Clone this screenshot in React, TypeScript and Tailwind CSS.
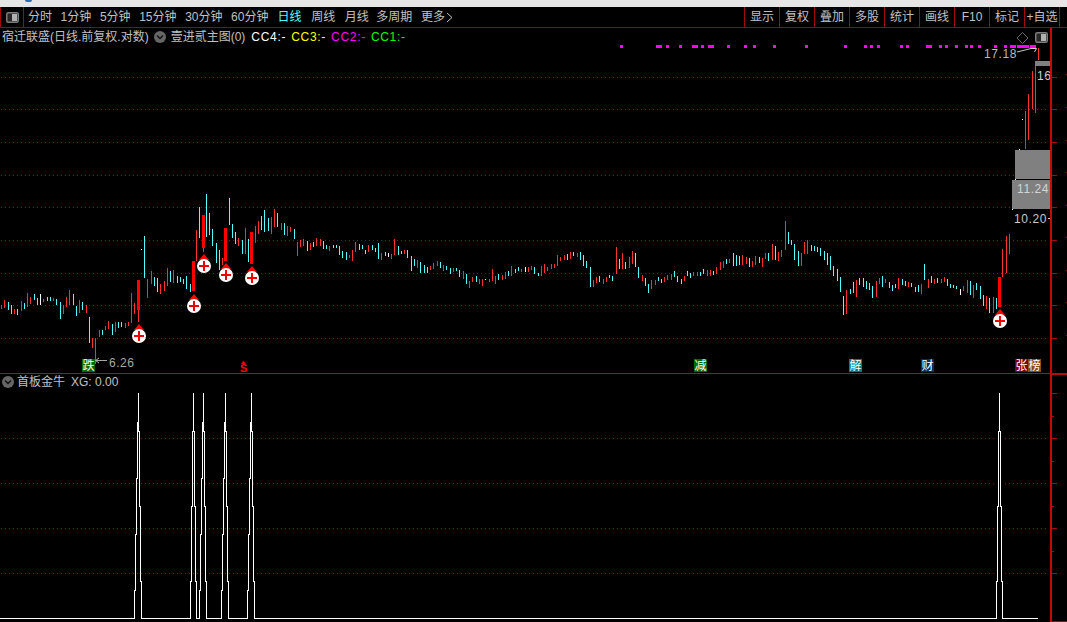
const C: Record<string, string> = { r: "#ff3232", c: "#54ffff", w: "#ffffff" };
type K = [number, number, number, string];

const seg1: K[] = [[4,345,358,"r"],[13,330,355,"r"],[25,337,362,"c"],[34,345,372,"c"],[43,357,372,"r"],[52,358,375,"c"],[64,333,363,"r"],[73,340,357,"c"],[82,309,350,"r"],[91,320,340,"r"],[103,312,330,"c"],[112,325,345,"c"],[121,312,345,"w"],[130,327,335,"r"],[142,322,333,"c"],[151,322,335,"c"],[160,325,335,"r"],[169,327,345,"c"],[181,336,387,"c"],[190,345,373,"r"],[199,320,350,"r"],[208,300,345,"r"],[220,312,345,"c"],[229,348,377,"c"],[238,330,370,"r"],[247,336,360,"c"],[259,345,368,"r"],[268,381,458,"c"],[277,443,473,"r"],[286,443,520,"r"],[298,420,440,"r"],[307,420,435,"c"],[316,407,420,"r"],[325,393,417,"r"],[337,402,435,"c"],[346,395,425,"r"],[355,396,413,"c"],[364,397,412,"c"],[376,399,415,"r"],[385,395,407,"r"],[394,308,397,"r"],[403,340,372,"r"],[415,350,395,"r"],[433,138,263,"c"],[442,267,323,"r"],[454,243,283,"r"],[463,262,290,"c"],[472,265,308,"c"],[481,282,312,"r"],[493,272,302,"r"],[502,235,288,"r"],[511,243,276,"c"],[520,240,278,"r"],[532,258,278,"c"],[541,262,276,"c"],[550,267,283,"c"],[559,258,297,"c"],[571,282,305,"c"],[589,120,212,"r"],[598,52,145,"c"],[610,170,185,"r"],[619,12,140,"c"],[628,70,135,"c"],[637,118,170,"c"],[649,160,220,"c"],[658,180,240,"c"],[667,205,225,"r"],[688,25,107,"c"],[697,103,145,"c"],[706,125,160,"c"],[715,145,170,"r"],[727,150,192,"c"],[736,113,192,"r"],[745,148,218,"c"],[766,108,160,"r"],[775,93,132,"r"],[784,78,120,"c"],[793,60,125,"c"],[805,85,125,"c"],[814,80,132,"r"],[823,57,110,"r"],[832,68,110,"c"],[844,100,120,"r"],[853,100,137,"c"],[862,108,137,"r"],[871,112,128,"r"],[883,118,147,"c"],[892,155,197,"r"]];
const seg2: K[] = [[1,90,110,"r"],[10,88,110,"r"],[22,93,122,"c"],[31,98,120,"r"],[40,95,110,"c"],[49,84,108,"r"],[61,87,107,"r"],[70,92,115,"c"],[79,105,118,"c"],[88,108,122,"r"],[100,105,114,"c"],[109,105,114,"c"],[118,108,135,"c"],[127,123,145,"c"],[139,125,150,"c"],[148,135,143,"r"],[157,120,152,"r"],[166,96,125,"r"],[178,102,120,"c"],[187,105,118,"c"],[196,120,132,"c"],[205,105,125,"r"],[217,105,120,"c"],[226,113,126,"c"],[235,98,145,"c"],[244,128,150,"r"],[256,126,138,"c"],[265,128,140,"w"],[274,132,147,"r"],[283,87,135,"r"],[295,108,135,"c"],[304,122,132,"c"],[313,120,132,"r"],[322,120,144,"c"],[334,138,183,"c"],[343,147,168,"c"],[352,150,175,"r"],[361,155,187,"c"],[373,165,190,"c"],[382,170,187,"c"],[391,168,180,"r"],[400,158,175,"r"],[412,153,168,"r"],[421,155,172,"c"],[430,165,183,"r"],[439,168,180,"c"],[451,173,190,"c"],[460,175,187,"r"],[469,174,184,"c"],[478,180,200,"c"],[490,183,207,"r"],[499,192,222,"c"],[508,213,234,"r"],[517,200,215,"r"],[529,198,216,"c"],[538,207,222,"r"],[547,207,228,"r"],[556,207,209,"w"],[568,207,216,"r"],[577,177,213,"r"],[586,197,222,"r"],[595,192,210,"c"],[607,195,210,"r"],[616,185,205,"r"],[625,183,198,"c"],[634,168,198,"r"],[646,177,190,"c"],[655,171,184,"c"],[664,177,187,"r"],[676,170,184,"w"],[685,170,184,"r"],[694,168,180,"r"],[703,170,192,"c"],[715,189,198,"c"],[724,168,198,"r"],[733,162,190,"r"],[742,171,183,"r"],[754,163,178,"r"],[763,162,175,"r"],[772,135,168,"r"],[781,140,153,"r"],[793,135,150,"r"],[802,132,150,"c"],[811,126,147,"r"],[820,126,138,"c"],[832,129,141,"r"],[841,126,150,"c"],[850,135,168,"c"],[859,153,174,"c"],[871,171,231,"c"],[880,210,231,"r"],[889,201,219,"r"],[898,198,216,"c"],[910,207,222,"r"],[919,201,216,"r"],[928,195,204,"c"],[937,198,213,"c"],[949,111,192,"r"],[958,147,177,"c"],[967,129,177,"r"],[976,156,177,"c"],[988,141,174,"r"],[997,123,162,"r"],[1006,129,171,"c"],[1015,171,204,"c"],[1027,195,213,"r"],[1036,204,228,"c"],[1045,222,249,"c"]];
const seg3: K[] = [[4,210,237,"r"],[16,210,225,"r"],[25,202,215,"c"],[34,207,219,"c"],[43,202,217,"r"],[52,195,210,"r"],[64,192,210,"r"],[73,183,202,"c"],[82,198,217,"c"],[94,207,222,"c"],[103,198,213,"r"],[112,183,198,"c"],[121,190,204,"c"],[130,187,198,"r"],[142,187,198,"r"],[151,185,197,"c"],[160,177,192,"c"],[172,180,198,"r"],[181,180,198,"r"],[190,182,195,"c"],[199,171,193,"r"],[211,156,180,"r"],[220,153,174,"r"],[229,147,162,"c"],[238,147,159,"r"],[250,129,168,"c"],[259,135,168,"c"],[268,138,165,"c"],[277,135,165,"r"],[289,141,162,"r"],[298,144,171,"c"],[307,153,171,"r"],[316,138,165,"r"],[328,141,159,"c"],[337,144,171,"r"],[346,129,147,"r"],[355,129,153,"c"],[367,102,150,"r"],[376,108,150,"c"],[385,126,153,"r"],[394,120,141,"r"],[406,33,120,"r"],[415,66,102,"c"],[424,90,105,"c"],[433,102,150,"c"],[445,123,168,"c"],[454,129,168,"r"],[463,96,132,"r"],[472,90,132,"r"],[484,105,123,"c"],[493,108,123,"c"],[502,111,126,"c"],[511,114,138,"c"],[523,123,150,"c"],[532,129,165,"c"],[541,138,180,"c"],[550,168,198,"c"],[562,177,213,"c"],[571,201,246,"c"],[580,258,315,"c"],[589,240,312,"r"],[601,237,252,"c"],[610,216,249,"c"],[619,210,261,"r"],[628,204,225,"c"],[640,204,231,"c"],[649,213,237,"c"],[658,219,240,"c"],[667,228,264,"c"],[679,213,261,"r"],[688,204,222,"r"],[697,198,231,"c"],[706,207,219,"r"],[718,216,234,"c"],[727,225,243,"c"],[736,222,234,"c"],[745,204,237,"r"],[757,207,225,"c"],[766,213,228,"c"],[775,216,231,"r"],[784,219,231,"c"],[796,231,246,"c"],[805,225,246,"c"],[814,222,252,"r"],[823,162,210,"c"],[835,207,234,"r"],[844,198,219,"c"],[853,207,222,"r"],[862,204,219,"c"],[874,207,219,"r"],[883,201,216,"r"],[892,207,228,"c"],[901,222,234,"c"],[910,225,234,"c"],[919,228,237,"c"],[931,237,255,"w"],[940,228,243,"r"],[952,210,249,"r"],[961,213,255,"c"],[970,225,264,"r"],[979,219,240,"c"],[991,228,267,"c"],[1000,255,288,"c"],[1009,258,297,"r"],[1018,264,309,"c"],[1030,261,309,"r"],[1039,264,297,"c"],[1058,117,201,"r"],[1069,78,189,"r"],[1078,72,132,"r"]];

const candles: { x: number; y1: number; y2: number; c: string }[] = [
  ...seg1.map(([x, a, b, c]) => ({ x: Math.floor(x / 3), y1: a / 3 + 190, y2: b / 3 + 190, c: C[c] })),
  ...seg2.map(([x, a, b, c]) => ({ x: Math.floor(x / 3) + 300, y1: a / 3 + 210, y2: b / 3 + 210, c: C[c] })),
  ...seg3.map(([x, a, b, c]) => ({ x: Math.floor(x / 3) + 650, y1: a / 3 + 210, y2: b / 3 + 210, c: C[c] })),
  { x: 1025, y1: 111, y2: 149, c: C.r },
  { x: 1028, y1: 94, y2: 140, c: C.r },
  { x: 1032, y1: 71, y2: 109, c: C.r },
  { x: 1035, y1: 65, y2: 113, c: C.r },
  { x: 1038, y1: 48, y2: 60, c: C.r },
];

const bodies = [[137, 280, 310], [192, 261, 291], [202, 215, 248], [224, 228, 261], [250, 232, 264], [998, 277, 307]];
const markers = [[139, 336], [194, 306], [204, 266], [226, 275], [252, 278], [1000, 321]];
const magenta: [number, number][] = [[620,3],[656,6],[666,3],[679,3],[692,6],[701,3],[708,6],[727,3],[744,3],[753,3],[773,3],[805,3],[844,3],[864,3],[870,3],[877,3],[900,3],[906,3],[926,6],[939,3],[945,3],[955,3],[965,3],[970,3],[978,3],[994,3],[1004,3],[1010,6],[1017,12],[1030,6]];
const topGrid = [77, 109, 142, 175, 207, 240, 273, 305, 338];
const lowGrid = [438, 483, 528, 573];
const labels = [
  { t: "跌", x: 82, c: "bg-[#006b00]" },
  { t: "减", x: 694, c: "bg-[#006b00]" },
  { t: "解", x: 849, c: "bg-[#007a7a]" },
  { t: "财", x: 921, c: "bg-[#00305c]" },
  { t: "张", x: 1015, c: "bg-[#800000]" },
  { t: "榜", x: 1028, c: "bg-[#8a4a10]" },
];
const leftItems: [string, string][] = [
  ["分时", ""],
  ["1分钟", ""],
  ["5分钟", ""],
  ["15分钟", ""],
  ["30分钟", ""],
  ["60分钟", ""],
  ["日线", "ml-[0.5px] text-[#54ffff]"],
  ["周线", "ml-px"],
  ["月线", "ml-px"],
  ["多周期", "-ml-px"],
];
const rightItems = ["显示", "复权", "叠加", "多股", "统计", "画线", "F10", "标记", "+自选"];

const peakL4 = [[-4, 590], [-3, 534], [-2, 478], [-1, 422]];
const peakL3 = [[-3, 581], [-2, 506], [-1, 431]];
function peakPoints(c: number, left: number[][]) {
  const p: string[] = [`${c + left[0][0] + 0.5},618.5`];
  let lastY = 618.5;
  left.forEach(([dx, y]) => {
    p.push(`${c + dx + 0.5},${lastY}`, `${c + dx + 0.5},${y}`);
    lastY = y;
  });
  p.push(`${c + 0.5},${lastY}`, `${c + 0.5},393`, `${c + 0.5},431`);
  p.push(`${c + 1.5},431`, `${c + 1.5},506`, `${c + 2.5},506`, `${c + 2.5},581`, `${c + 3.5},581`, `${c + 3.5},618.5`);
  return p.join(" ");
}

function ToggleIcon() {
  return (
    <svg width="13" height="11" viewBox="0 0 13 11" className="shrink-0">
      <rect x="0.75" y="0.75" width="11.5" height="9.5" rx="1.5" fill="#262626" stroke="#7c7c7c" strokeWidth="1.5" />
      <rect x="6" y="2" width="5" height="7" fill="#b0b0b0" />
    </svg>
  );
}

function Chevron() {
  return (
    <svg width="12" height="12" viewBox="0 0 12 12" className="shrink-0">
      <circle cx="6" cy="6" r="6" fill="#666" />
      <path d="M3 4.5 L6 7.5 L9 4.5" fill="none" stroke="#111" strokeWidth="1.4" />
    </svg>
  );
}

const font = "font-['Liberation_Sans','Noto_Sans_CJK_SC',sans-serif]";

export default function App() {
  return (
    <div className={`w-[1067px] h-[622px] overflow-hidden bg-black flex flex-col text-xs text-[#c0c0c0] ${font}`}>
      <div className="h-[7px] shrink-0 bg-[#e6e6e6] relative">
        <div className="absolute left-[25px] top-0 w-[7px] h-[2px] rounded-b bg-[#2a6db0]" />
      </div>
      <div className="h-[21px] shrink-0 flex items-stretch border-b border-[#8f0a0a]">
        <div className="w-[24px] shrink-0 flex items-center justify-center border-x border-[#a00a0a]">
          <ToggleIcon />
        </div>
        <div className="flex items-center gap-[8.6px] pl-[4px]">
          {leftItems.map(([t, c]) => (
            <span key={t} className={c}>{t}</span>
          ))}
          <span className="flex items-center gap-[1px]">
            更多
            <svg width="7" height="11" viewBox="0 0 7 11"><path d="M1 1 L6 5.5 L1 10" fill="none" stroke="#c0c0c0" /></svg>
          </span>
        </div>
        <div className="ml-auto mr-[7px] flex items-stretch border-r border-[#a00a0a]">
          {rightItems.map((t) => (
            <div key={t} className="w-[35px] flex items-center justify-center border-l border-[#a00a0a]">{t}</div>
          ))}
        </div>
      </div>

      <div className="h-[346px] shrink-0 relative border-b border-[#b80c0c]">
        <div className="flex items-center h-[17px] pl-[2px] whitespace-nowrap relative z-10">
          <span>宿迁联盛(日线.前复权.对数)</span>
          <span className="ml-[5px]"><Chevron /></span>
          <span className="ml-[5px]">壹进贰主图(0)</span>
          <span className="ml-[6px] tracking-[0.7px] text-white">CC4:-</span>
          <span className="ml-[5px] tracking-[0.7px] text-[#ffff00]">CC3:-</span>
          <span className="ml-[5px] tracking-[0.7px] text-[#ff00ff]">CC2:-</span>
          <span className="ml-[5px] tracking-[0.7px] text-[#00ff00]">CC1:-</span>
        </div>
        <span className="absolute left-[1035px] top-[4px] z-10"><ToggleIcon /></span>
        <span className="absolute left-[984px] top-[18px] tracking-[0.6px] text-[#b8b8b8]">17.18</span>
        <span className="absolute left-[1037px] top-[40px] tracking-[0.5px] text-[#d0d0d0]">16</span>
        <span className="absolute left-[1017px] top-[153px] z-10 tracking-[0.6px] text-[#d4d4d4]">11.24</span>
        <span className="absolute left-[1014px] top-[183px] tracking-[0.6px] text-[#c8c8c8]">10.20</span>
        <span className="absolute left-[109px] top-[327px] tracking-[0.5px] text-[#a8a8a8]">6.26</span>
        <span className="absolute left-[240px] top-[335px] z-10 text-[11px] leading-none font-bold text-[#ff0000]">S</span>
        {labels.map((l) => (
          <span key={l.t} className={`absolute top-[331px] w-[13px] h-[13px] flex items-center justify-center text-white text-xs leading-none ${l.c}`} style={{ left: l.x }}>{l.t}</span>
        ))}
      </div>

      <div className="flex-1 relative">
        <div className="flex items-center h-[15px] pl-[2px] whitespace-nowrap">
          <Chevron />
          <span className="ml-[3px]">首板金牛</span>
          <span className="ml-[6px]">XG: 0.00</span>
        </div>
      </div>

      <svg width="1067" height="622" viewBox="0 0 1067 622" className="absolute left-0 top-0 pointer-events-none" shapeRendering="crispEdges">
        {topGrid.map((y) => (
          <line key={y} x1="1" x2="1046" y1={y + 0.5} y2={y + 0.5} stroke="#8a1010" strokeDasharray="1 3" />
        ))}
        {lowGrid.map((y) => (
          <g key={y}>
            <line x1="1" x2={y < 500 ? 995 : 994} y1={y + 0.5} y2={y + 0.5} stroke="#8a1010" strokeDasharray="1 3" />
            <line x1="1005" x2="1046" y1={y + 0.5} y2={y + 0.5} stroke="#8a1010" strokeDasharray="1 3" />
          </g>
        ))}
        {magenta.map(([x, w]) => <rect key={x} x={x} y="45" width={w} height="3" fill="#ff00ff" />)}

        {candles.map((k, i) => (
          <rect key={i} x={k.x} y={Math.round(k.y1)} width="1" height={Math.max(1, Math.round(k.y2 - k.y1))} fill={k.c} />
        ))}
        {[[141, 249], [1022, 119], [1019, 149], [1015, 179], [1012, 209]].map(([x, y]) => (
          <rect key={x} x={x} y={y} width="1" height="1" fill="#fff" />
        ))}
        {bodies.map(([x, a, b]) => <rect key={x} x={x} y={a} width="3" height={b - a} fill="#ff0000" />)}

        <rect x="1035" y="61" width="15" height="5" fill="#808080" />
        <rect x="1015" y="150" width="35" height="29" fill="#808080" />
        <rect x="1012" y="180" width="38" height="29" fill="#808080" />

        <g shapeRendering="auto">
          {markers.map(([x, y]) => (
            <g key={x}>
              <path d={`M${x} ${y - 12} L${x + 5} ${y - 6} L${x - 5} ${y - 6} Z`} fill="#ff0000" />
              <circle cx={x} cy={y} r="7" fill="#fff" />
              <rect x={x - 5} y={y - 1} width="10" height="2" fill="#f00000" />
              <rect x={x - 1} y={y - 5} width="2" height="10" fill="#f00000" />
            </g>
          ))}
          <path d="M1022.5 32.5 L1028 38 L1022.5 43.5 L1017 38 Z" fill="none" stroke="#666" />
          <path d="M1017 52 L1031 48.5 H1036.5 L1034.5 52" fill="none" stroke="#c8c8c8" />
          <path d="M96 360.5 H107 M99 358 L95.5 360.5 L99 363" fill="none" stroke="#a8a8a8" />
          <path d="M243.5 361 L246 364 H241 Z" fill="#f00" />
        </g>
        <rect x="1048" y="218" width="3" height="1" fill="#c8c8c8" />

        <rect x="1050" y="28" width="2" height="594" fill="#c80808" />
        {[77, 109, 142, 175, 207, 240, 273, 305, 338, 393, 438, 483, 528, 573].map((y) => (
          <rect key={y} x="1052" y={y} width="5" height="1" fill="#a80a0a" />
        ))}
        {[416, 461, 506, 551].map((y) => <rect key={y} x="1052" y={y} width="2" height="1" fill="#a80a0a" />)}
        {[74, 107, 140, 172, 205, 237, 270, 302, 335].map((y) => <rect key={y} x="1066" y={y} width="1" height="1" fill="#a80a0a" />)}
        <rect x="1052" y="374" width="15" height="1" fill="#b80c0c" />
        <rect x="1052" y="621" width="15" height="1" fill="#8f0a0a" />

        <g fill="none" stroke="#ffffff" strokeWidth="1">
          <polyline points={peakPoints(138, peakL4)} />
          <polyline points={peakPoints(193, peakL3)} />
          <polyline points={peakPoints(203, peakL4)} />
          <polyline points={peakPoints(225, peakL4)} />
          <polyline points={peakPoints(251, peakL4)} />
          <polyline points={peakPoints(999, peakL3)} />
          <path d="M0 618.5 H134 M141 618.5 H190 M196 618.5 H199 M206 618.5 H221 M228 618.5 H247 M254 618.5 H996 M1002 618.5 H1038" />
        </g>
      </svg>
    </div>
  );
}
